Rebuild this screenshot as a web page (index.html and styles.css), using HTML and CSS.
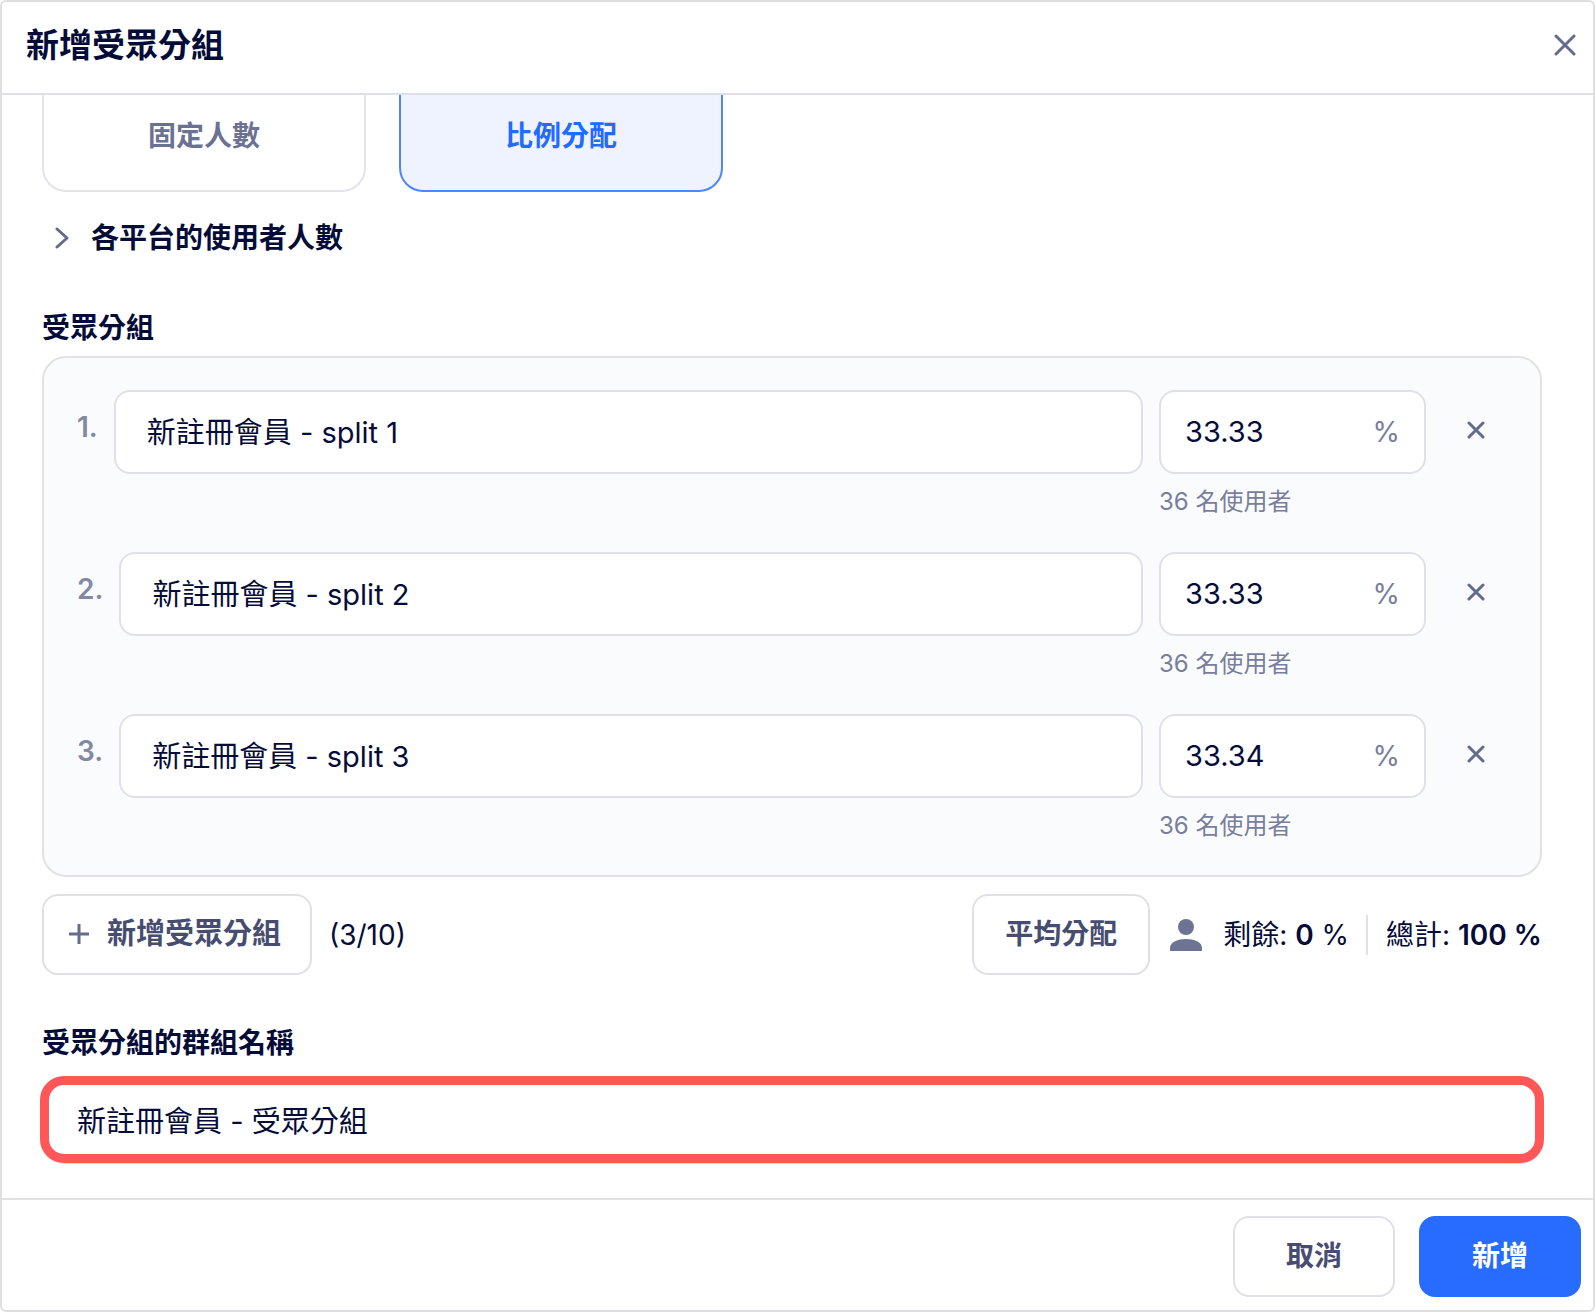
FILE: index.html
```html
<!DOCTYPE html>
<html lang="zh-Hant">
<head>
    <meta charset="UTF-8">
    <title>新增受眾分組</title>
    <link rel="stylesheet" href="styles.css">
</head>
<body>
<form class="dialog">
    <div class="dialog-header">
        <h1>新增受眾分組</h1>
        <button type="button" class="icon-btn" aria-label="關閉">
            <svg width="22" height="22" viewBox="0 0 22 22"><path d="M2 2l18 18M20 2L2 20"/></svg>
        </button>
    </div>
    <div class="dialog-body">
        <div class="tabs">
            <button type="button" class="tab">固定人數</button>
            <button type="button" class="tab selected">比例分配</button>
        </div>
        <button type="button" class="toggle">
            <svg width="14" height="22" viewBox="0 0 14 22"><path d="M2 2l10 9-10 9"/></svg>
            各平台的使用者人數
        </button>
        <h2>受眾分組</h2>
        <div class="panel">
            <div class="row">
                <label class="num" for="name1">1.</label>
                <input type="text" class="name" id="name1" value="新註冊會員 - split 1">
                <div class="ratio">
                    <div class="ratio-box">
                        <input type="text" id="ratio1" value="33.33" aria-label="比例 1">
                        <label for="ratio1">%</label>
                    </div>
                    <p>36 名使用者</p>
                </div>
                <button type="button" class="icon-btn remove" aria-label="刪除">
                    <svg width="18" height="18" viewBox="0 0 18 18"><path d="M2 2l14 14M16 2L2 16"/></svg>
                </button>
            </div>
            <div class="row">
                <label class="num" for="name2">2.</label>
                <input type="text" class="name" id="name2" value="新註冊會員 - split 2">
                <div class="ratio">
                    <div class="ratio-box">
                        <input type="text" id="ratio2" value="33.33" aria-label="比例 2">
                        <label for="ratio2">%</label>
                    </div>
                    <p>36 名使用者</p>
                </div>
                <button type="button" class="icon-btn remove" aria-label="刪除">
                    <svg width="18" height="18" viewBox="0 0 18 18"><path d="M2 2l14 14M16 2L2 16"/></svg>
                </button>
            </div>
            <div class="row">
                <label class="num" for="name3">3.</label>
                <input type="text" class="name" id="name3" value="新註冊會員 - split 3">
                <div class="ratio">
                    <div class="ratio-box">
                        <input type="text" id="ratio3" value="33.34" aria-label="比例 3">
                        <label for="ratio3">%</label>
                    </div>
                    <p>36 名使用者</p>
                </div>
                <button type="button" class="icon-btn remove" aria-label="刪除">
                    <svg width="18" height="18" viewBox="0 0 18 18"><path d="M2 2l14 14M16 2L2 16"/></svg>
                </button>
            </div>
        </div>
        <div class="actions">
            <button type="button" class="btn btn-add">
                <svg width="20" height="20" viewBox="0 0 20 20"><path d="M10 0v20M0 10h20"/></svg>
                新增受眾分組
            </button>
            <span class="count">(3/10)</span>
            <button type="button" class="btn btn-even">平均分配</button>
            <svg class="user" width="32" height="32" viewBox="0 0 32 32"><circle cx="16" cy="8" r="8"/><path d="M0 32v-3c0-6 8-9 16-9s16 3 16 9v3z"/></svg>
            <span class="rest">剩餘: <b>0</b> %</span>
            <span class="total">總計: <b>100 %</b></span>
        </div>
        <label class="group-label" for="group">受眾分組的群組名稱</label>
        <input type="text" class="group" id="group" value="新註冊會員 - 受眾分組">
    </div>
    <div class="dialog-footer">
        <button type="button" class="btn">取消</button>
        <button type="submit" class="btn btn-primary">新增</button>
    </div>
</form>
</body>
</html>
```
FILE: styles.css
```css
*{
    margin: 0;
    padding: 0;
    box-sizing: border-box;
}
body{
    background: #fff;
    color: #050c38;
}
body,input,button{
    font-family: Inter, "Noto Sans CJK TC", sans-serif;
    font-size: 28px;
    line-height: 40px;
}
button{
    background: none;
    border: 0;
    cursor: pointer;
}
input{
    color: #050c38;
    min-width: 0;
    outline: none;
    font-size: 29px;
}
svg{
    display: block;
    fill: none;
    stroke: #646b8c;
    stroke-width: 3;
    stroke-linecap: round;
    stroke-linejoin: round;
}
.dialog{
    border: 2px solid #dfdfe2;
    border-radius: 6px;
}
.dialog-header{
    display: flex;
    justify-content: space-between;
    align-items: center;
    padding: 23px 15px 28px 24px;
    border-bottom: 2px solid #dfe0e7;
}
.dialog-header h1{
    font-size: 33px;
    font-weight: 600;
}
.icon-btn{
    padding: 2px;
}
.dialog-body{
    padding: 0 51px 35px 40px;
}
.tabs{
    display: flex;
    gap: 33px;
}
/* upper part of the tabs is scrolled under the header */
.tab{
    width: 324px;
    padding: 21px 0 34px;
    border: 2px solid #e4e5ec;
    border-top: 0;
    border-radius: 0 0 24px 24px;
    color: #6b7192;
    font-weight: 600;
}
.tab.selected{
    background: #eff3ff;
    border-color: #4f84ff;
    color: #256aff;
}
.toggle{
    display: flex;
    align-items: center;
    gap: 22px;
    margin: 26px 0 50px;
    padding-left: 13px;
    color: #050c38;
    font-weight: 600;
}
h2,.group-label{
    display: block;
    font-size: 28px;
    font-weight: 600;
}
.panel{
    display: flex;
    flex-direction: column;
    gap: 32px;
    margin: 8px 0 17px;
    padding: 32px 47px 31px 33px;
    background: #fafbfd;
    border: 2px solid #e0e2e8;
    border-radius: 24px;
}
.row{
    display: flex;
    align-items: flex-start;
}
.num{
    margin-right: 16px;
    padding: 17px 0;
    color: #8489a3;
    font-weight: 600;
}
.name,.ratio-box{
    height: 84px;
    background: #fff;
    border: 2px solid #e0e1e8;
    border-radius: 16px;
}
.name{
    flex: 1;
    padding: 0 31px 4px;
}
.ratio{
    width: 267px;
    margin: 0 33px 0 16px;
}
.ratio-box{
    display: flex;
    align-items: center;
    padding: 0 24px;
}
.ratio-box input{
    flex: 1;
    border: 0;
    background: none;
}
.ratio-box label{
    color: #787e9c;
}
.ratio p{
    margin-top: 10px;
    color: #787e9c;
    font-size: 24px;
    line-height: 36px;
}
.remove{
    padding: 31px 8px;
}
.actions{
    display: flex;
    align-items: center;
    margin-bottom: 48px;
}
.btn{
    min-width: 162px;
    padding: 18px 31px 19px;
    background: #fff;
    border: 2px solid #e0e1e8;
    border-radius: 16px;
    color: #474d71;
    font-weight: 600;
}
.btn-add{
    display: flex;
    align-items: center;
    gap: 18px;
    padding-left: 25px;
    padding-right: 29px;
    font-size: 29px;
}
.count{
    margin: 0 auto 0 17px;
}
.user{
    margin: 0 21px 0 20px;
    fill: #6d7392;
    stroke: none;
}
.actions b{
    font-weight: 600;
}
.total{
    margin-left: 17px;
    padding-left: 18px;
    border-left: 2px solid #e0e1e8;
}
.group{
    display: block;
    width: calc(100% + 4px);
    height: 87px;
    margin: 13px -2px 0;
    padding: 0 28px 2px;
    background: #fff;
    border: 9px solid #ff5757;
    border-radius: 24px;
    box-shadow: 0 1px 0 #dcdee5;
}
.dialog-footer{
    display: flex;
    justify-content: flex-end;
    gap: 24px;
    padding: 16px 12px 13px;
    border-top: 2px solid #e0e1e8;
}
.btn-primary{
    background: #286bff;
    border-color: #286bff;
    color: #fff;
}
```
